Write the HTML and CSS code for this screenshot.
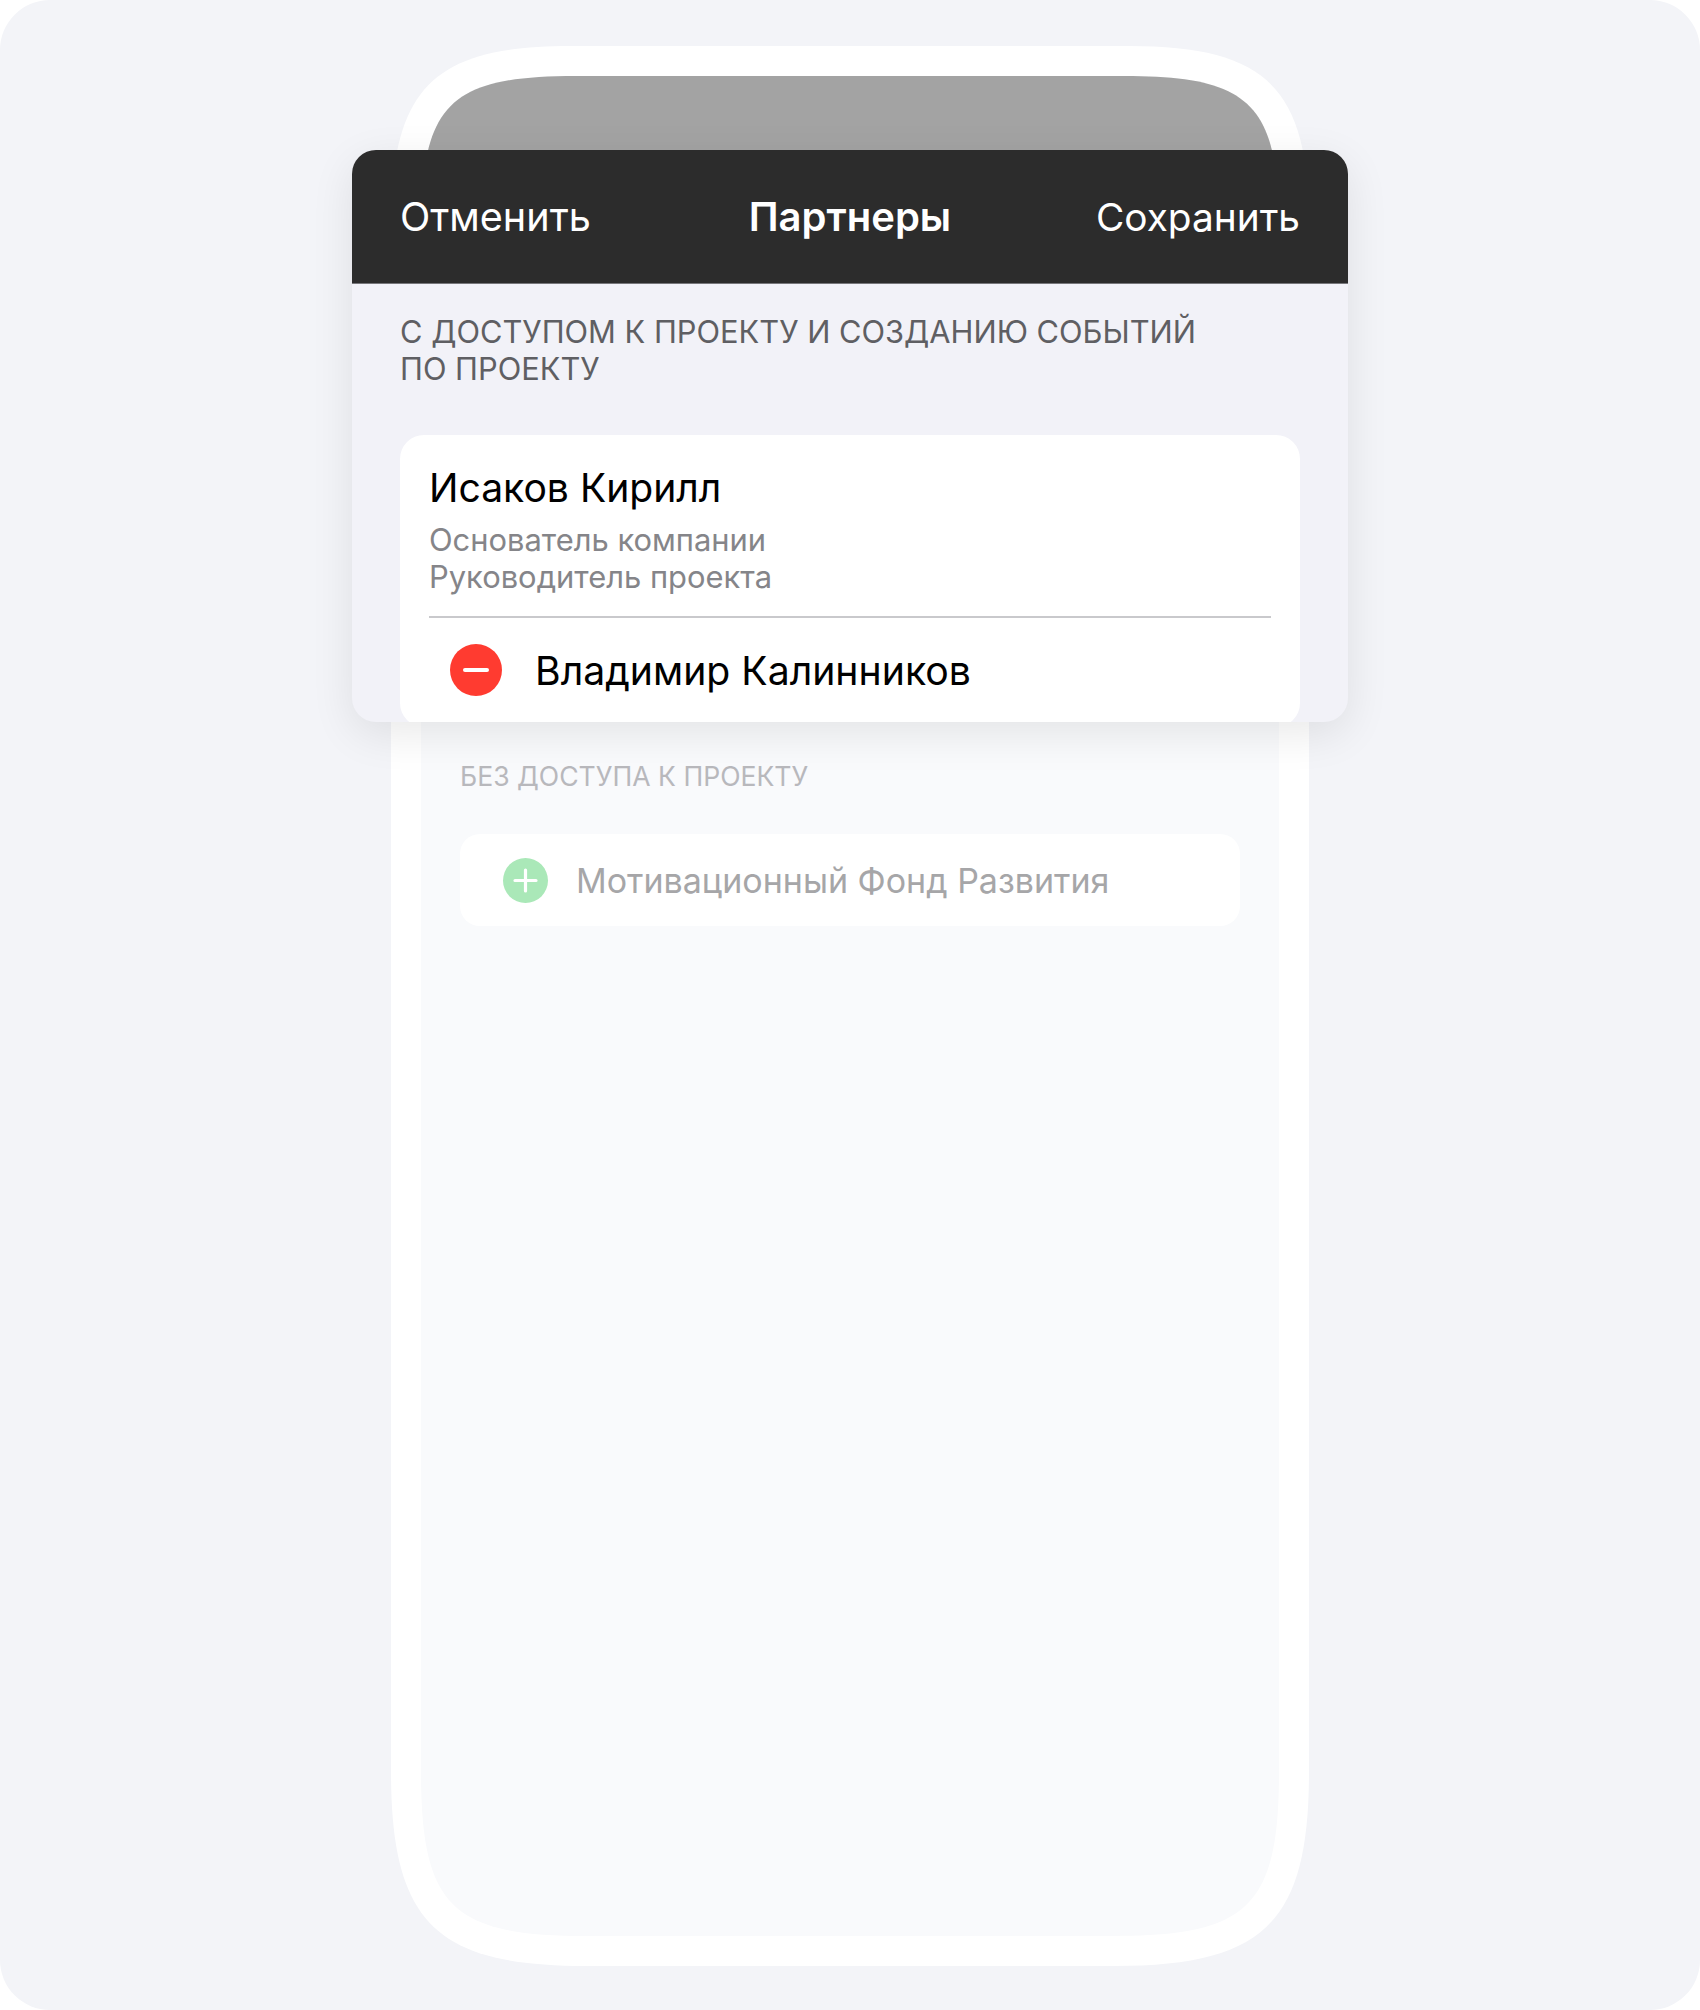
FILE: index.html
```html
<!DOCTYPE html>
<html lang="ru">
<head>
    <meta charset="UTF-8">
    <title>Партнеры</title>
    <link rel="stylesheet" href="styles.css">
</head>
<body>
    <div class="panel">
        <div class="stage">
            <!-- phone behind the sheet -->
            <div class="phone">
                <div class="screen">
                    <div class="screen-top"></div>
                    <div class="screen-body">
                        <div class="label-muted">БЕЗ ДОСТУПА К ПРОЕКТУ</div>
                        <div class="row-muted">
                            <span class="icon-add">
                                <svg width="45" height="45" viewBox="0 0 45 45"><path d="M22.5 12v21M12 22.5h21" stroke="#fff" stroke-width="3.2" stroke-linecap="round" fill="none"/></svg>
                            </span>
                            <span>Мотивационный Фонд Развития</span>
                        </div>
                    </div>
                </div>
            </div>

            <!-- sheet on top -->
            <div class="sheet">
                <div class="navbar">
                    <span class="nav-btn">Отменить</span>
                    <strong class="nav-title">Партнеры</strong>
                    <span class="nav-btn nav-save">Сохранить</span>
                </div>
                <div class="section-label">С ДОСТУПОМ К ПРОЕКТУ И СОЗДАНИЮ СОБЫТИЙ<br>ПО ПРОЕКТУ</div>
                <div class="card">
                    <div class="person">
                        <div class="person-name">Исаков Кирилл</div>
                        <div class="person-role">Основатель компании<br>Руководитель проекта</div>
                    </div>
                    <div class="partner">
                        <span class="icon-remove">
                            <svg width="52" height="52" viewBox="0 0 52 52"><path d="M15 26h22" stroke="#fff" stroke-width="4" stroke-linecap="round" fill="none"/></svg>
                        </span>
                        <span>Владимир Калинников</span>
                    </div>
                </div>
            </div>
        </div>
    </div>
</body>
</html>
```

FILE: styles.css
```css
html, body {
    margin: 0;
    background: #fff;
}
body {
    font-family: Inter, "Noto Sans", sans-serif;
    color: #000;
}
.panel {
    height: 2010px;
    padding-top: 46px;
    box-sizing: border-box;
    background: #f3f4f8;
    border-radius: 50px;
}
.stage {
    position: relative;
    width: 918px;
    margin: 0 auto;
}
.phone {
    height: 1920px;
    padding: 30px;
    box-sizing: border-box;
    background: #fff;
    clip-path: path("M0 180C0 42 42 0 180 0H738C876 0 918 42 918 180V1725C918 1876 874 1920 723 1920H195C44 1920 0 1876 0 1725Z");
}
.screen {
    height: 1860px;
    background: #f9fafc;
    clip-path: path("M0 155C0 28 28 0 155 0H703C830 0 858 28 858 155V1695C858 1830 828 1860 693 1860H165C30 1860 0 1830 0 1695Z");
}
.screen-top {
    height: 74px;
    background: #a3a3a3;
}
.screen-body {
    padding: 608px 39px 0;
}
.label-muted {
    font-size: 26.6px;
    line-height: 37px;
    color: #b8b8bc;
}
.row-muted {
    display: flex;
    align-items: center;
    gap: 28px;
    height: 92px;
    margin-top: 39px;
    padding-left: 43px;
    background: #fff;
    border-radius: 20px;
    font-size: 34px;
    color: #a6a6a8;
}
.icon-add {
    display: flex;
    width: 45px;
    height: 45px;
    border-radius: 50%;
    background: #aae8b8;
}
.sheet {
    position: absolute;
    top: 104px;
    left: -39px;
    width: 996px;
    height: 572px;
    overflow: hidden;
    background: #f2f2f8;
    border-radius: 24px;
    box-shadow: 0 12px 44px rgba(0, 0, 0, .09);
}
.navbar {
    display: grid;
    grid-template-columns: 1fr auto 1fr;
    align-items: center;
    height: 133px;
    padding: 0 48px;
    background: #2c2c2c;
    border-bottom: 1px solid #77777b;
    color: #fff;
    font-size: 39.6px;
}
.nav-title {
    font-size: 40px;
    font-weight: 600;
}
.nav-save {
    justify-self: end;
    font-size: 38.8px;
}
.section-label {
    padding: 29px 48px 0;
    font-size: 30.8px;
    line-height: 37px;
    color: #5f5f63;
}
.card {
    height: 292px;
    margin: 48px 48px 0;
    padding: 0 29px;
    background: #fff;
    border-radius: 24px;
}
.person {
    padding: 27px 0 21px;
    border-bottom: 2px solid #c9c9cc;
}
.person-name {
    font-size: 39.1px;
    line-height: 52px;
}
.person-role {
    margin-top: 7px;
    font-size: 30.9px;
    line-height: 37px;
    color: #858589;
}
.partner {
    display: flex;
    align-items: center;
    gap: 33px;
    padding: 26px 0 0 21px;
    font-size: 39.2px;
}
.icon-remove {
    display: flex;
    width: 52px;
    height: 52px;
    border-radius: 50%;
    background: #ff3b30;
}
```
